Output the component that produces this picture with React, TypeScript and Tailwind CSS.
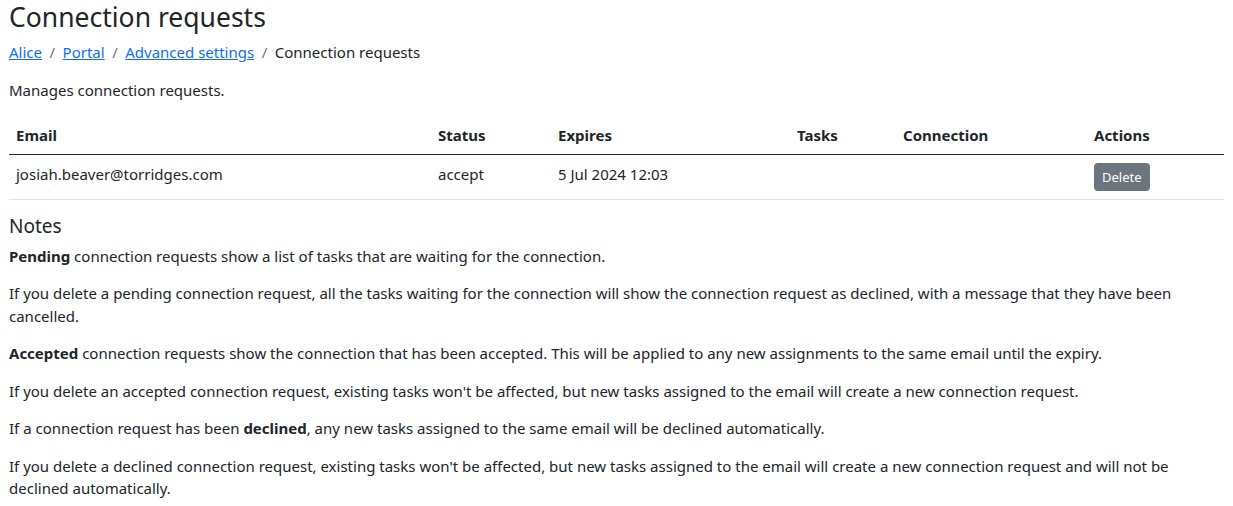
import React from 'react';

const rows = [
  {
    email: 'josiah.beaver@torridges.com',
    status: 'accept',
    expires: '5 Jul 2024 12:03',
    tasks: '',
    connection: '',
  },
];

const cols = [
  { label: 'Email', w: 'w-[422px]' },
  { label: 'Status', w: 'w-[120px]' },
  { label: 'Expires', w: 'w-[239px]' },
  { label: 'Tasks', w: 'w-[106px]' },
  { label: 'Connection', w: 'w-[191px]' },
  { label: 'Actions', w: 'w-[137px]' },
];

export default function App() {
  return (
    <div className="min-h-screen bg-white px-[9px] text-[15px] leading-[22.5px] text-[#212529] font-['Noto_Sans',sans-serif]">
      <h1 className="text-[26.5px] leading-[35px] font-normal">Connection requests</h1>

      <nav className="mt-[6px] flex items-center">
        <a href="#" className="text-[#0d6efd] underline">Alice</a>
        <span className="px-[7.5px] text-[#6c757d]">/</span>
        <a href="#" className="text-[#0d6efd] underline">Portal</a>
        <span className="px-[7.5px] text-[#6c757d]">/</span>
        <a href="#" className="text-[#0d6efd] underline">Advanced settings</a>
        <span className="px-[7.5px] text-[#6c757d]">/</span>
        <span>Connection requests</span>
      </nav>

      <p className="mt-[15px]">Manages connection requests.</p>

      <table className="mt-[15px] w-[1215px] table-fixed border-collapse">
        <thead>
          <tr className="border-b border-[#212529]">
            {cols.map(c => (
              <th key={c.label} className={`${c.w} px-[7px] pt-[8px] pb-[7px] text-left font-bold`}>
                {c.label}
              </th>
            ))}
          </tr>
        </thead>
        <tbody>
          {rows.map(r => (
            <tr key={r.email} className="border-b border-[#dee2e6]">
              <td className="px-[7px] py-[8px] align-top">{r.email}</td>
              <td className="px-[7px] py-[8px] align-top">{r.status}</td>
              <td className="px-[7px] py-[8px] align-top">{r.expires}</td>
              <td className="px-[7px] py-[8px] align-top">{r.tasks}</td>
              <td className="px-[7px] py-[8px] align-top">{r.connection}</td>
              <td className="px-[7px] py-[8px] align-top">
                <button className="h-[28px] rounded-[4px] bg-[#6c757d] px-[8px] text-[13px] leading-[20px] text-white">
                  Delete
                </button>
              </td>
            </tr>
          ))}
        </tbody>
      </table>

      <h2 className="mt-[14px] text-[19px] leading-[24px] font-normal">Notes</h2>

      <div className="mt-[7px] flex flex-col gap-[15px]">
        <p>
          <b>Pending</b> connection requests show a list of tasks that are waiting for the connection.
        </p>
        <p>
          If you delete a pending connection request, all the tasks waiting for the connection will show the
          connection request as declined, with a message that they have been cancelled.
        </p>
        <p>
          <b>Accepted</b> connection requests show the connection that has been accepted. This will be applied to
          any new assignments to the same email until the expiry.
        </p>
        <p>
          If you delete an accepted connection request, existing tasks won't be affected, but new tasks assigned
          to the email will create a new connection request.
        </p>
        <p>
          If a connection request has been <b>declined</b>, any new tasks assigned to the same email will be
          declined automatically.
        </p>
        <p>
          If you delete a declined connection request, existing tasks won't be affected, but new tasks assigned to
          the email will create a new connection request and will not be declined automatically.
        </p>
      </div>
    </div>
  );
}
